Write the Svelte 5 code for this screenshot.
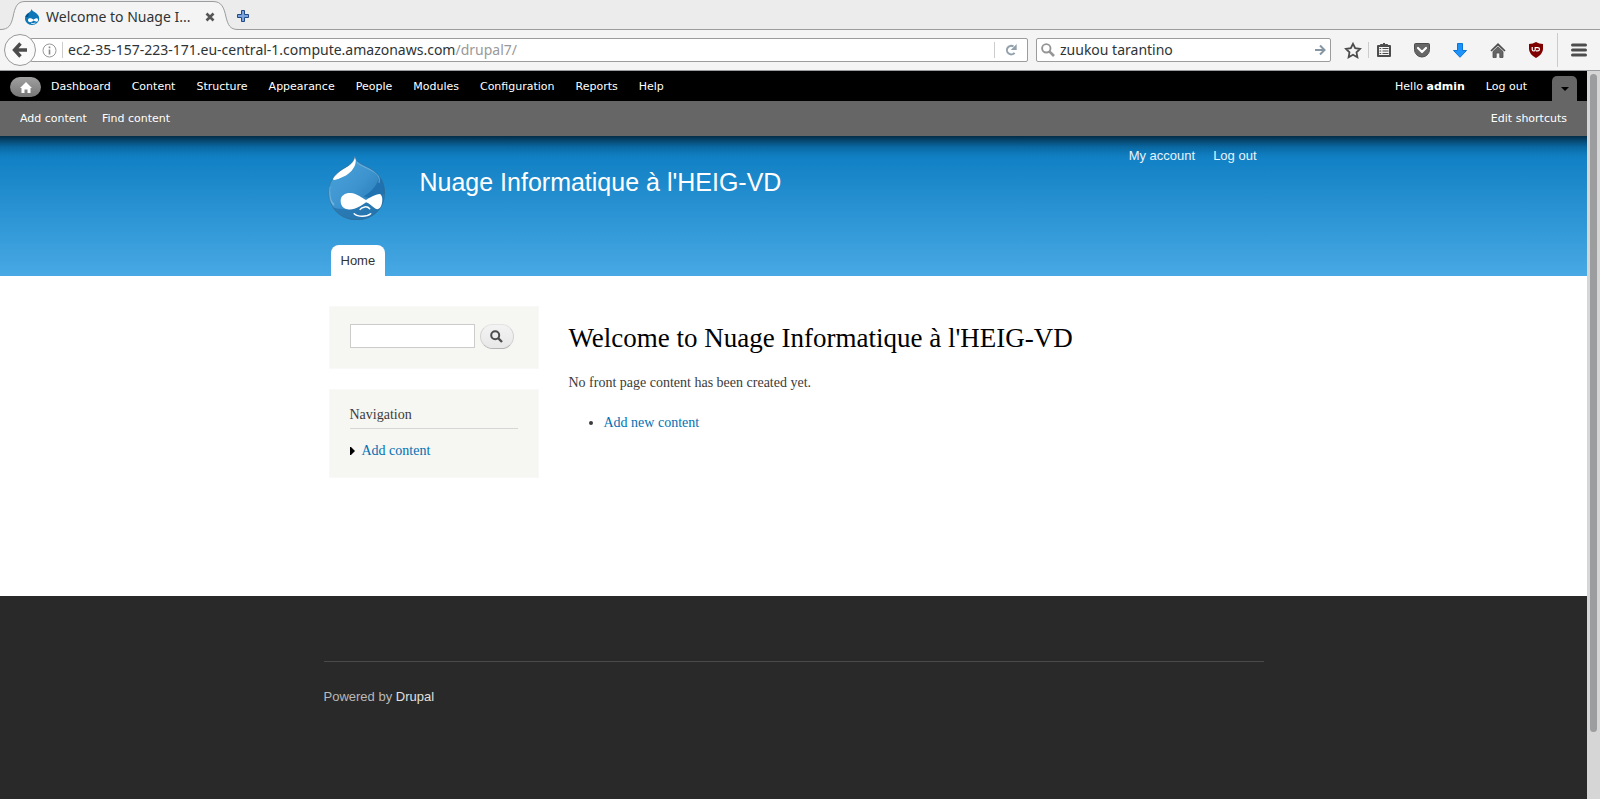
<script>
  const adminLinks = ['Dashboard', 'Content', 'Structure', 'Appearance', 'People', 'Modules', 'Configuration', 'Reports', 'Help'];
  const shortcuts = ['Add content', 'Find content'];
  let address = $state('ec2-35-157-223-171.eu-central-1.compute.amazonaws.com/drupal7/');
  let webSearch = $state('zuukou tarantino');
  let siteSearch = $state('');
  const domain = $derived(address.split('/')[0]);
  const path = $derived(address.slice(domain.length));
</script>

<div class="window">
  <header class="browser">
    <div class="tabstrip">
      <div class="tab">
        <svg class="tab-shape" viewBox="0 0 238 30" width="238" height="30" aria-hidden="true">
          <path d="M0 29.5C9 29.5 11 25 13 17C15 7 17 1.500 25 1.500H213C222 1.500 224 8 226 17C228 25 230 29.500 238 29.500V30H0Z" fill="#f4f4f4" />
          <path d="M0 29.500C9 29.500 11 25 13 17C15 7 17 1.500 25 1.500H213C222 1.500 224 8 226 17C228 25 230 29.500 238 29.500" fill="none" stroke="#9a9c9d" />
        </svg>
        <svg class="favicon" viewBox="0 0 16 16" width="16" height="16" aria-hidden="true">
          <path d="M7.500 0C8 2 10 2.500 12 4C14 5.500 15.200 7 15.200 9.500C15.200 13 12 16 8 16S1 13 1 9.500C1 6.500 2.500 5 5 3.500C6.500 2.500 7.300 1.500 7.500 0Z" fill="#0c76b8" />
          <path d="M1.500 8C2 6 3 5 5 4L4 8Z" fill="#064f80" />
          <path d="M4 11C4 9 6.500 8.500 9.500 10.700C12 8.500 14 8.700 14 10.800C14 13.500 12 13 9.700 11.600C6.500 14 4 13.500 4 11Z" fill="#fff" />
          <path d="M7 14.200Q9 15.200 11.500 14" fill="none" stroke="#fff" stroke-width=".8" />
        </svg>
        <span class="tab-title">Welcome to Nuage I...</span>
        <button class="plain" aria-label="Close tab">
          <svg viewBox="0 0 10 10" width="10" height="10"><path d="M1.500 1.500L8.500 8.500M8.500 1.500L1.500 8.500" stroke="#555" stroke-width="2.600" /></svg>
        </button>
      </div>
      <button class="plain new-tab" aria-label="New tab">
        <svg viewBox="0 0 12 12" width="12" height="12"><path d="M4.500 .5H7.500V4.500H11.500V7.500H7.500V11.500H4.500V7.500H.5V4.500H4.500Z" fill="#7ba3dc" stroke="#204a87" /></svg>
      </button>
    </div>

    <div class="navbar">
      <button class="plain back" aria-label="Back">
        <svg viewBox="0 0 16 16" width="16" height="16"><path d="M8.500 1.500L2.500 8L8.500 14.500M3 8H15" fill="none" stroke="#4c4c4c" stroke-width="3.400" /></svg>
      </button>
      <div class="field url">
        <svg viewBox="0 0 15 15" width="15" height="15" aria-hidden="true">
          <circle cx="7.500" cy="7.500" r="6.500" fill="none" stroke="#999" />
          <path d="M7.500 6.500V11.500M7.500 3.500V5.200" stroke="#888" stroke-width="1.600" />
        </svg>
        <span class="rule"></span>
        <span class="url-box">
          <span class="url-text" aria-hidden="true">{domain}<span>{path}</span></span>
          <input class="url-input" aria-label="Address" bind:value={address} />
        </span>
        <span class="rule"></span>
        <button class="plain reload" aria-label="Reload">
          <svg viewBox="0 0 12 12" width="12" height="12"><path d="M8.500 2.400A4.300 4.300 0 1 0 9.600 8.800" fill="none" stroke="#93a1ad" stroke-width="2" /><path d="M11.700 0V6H5.700Z" fill="#93a1ad" /></svg>
        </button>
      </div>
      <div class="field search">
        <svg viewBox="0 0 14 14" width="14" height="14" aria-hidden="true"><circle cx="5.300" cy="5.300" r="4.200" fill="none" stroke="#959595" stroke-width="1.900" /><path d="M8.300 8.300L13 13" stroke="#959595" stroke-width="2.600" /></svg>
        <input aria-label="Search the web" bind:value={webSearch} />
        <button class="plain" aria-label="Search">
          <svg viewBox="0 0 11 12" width="11" height="12"><path d="M0 6H9M5 1.500L9.500 6L5 10.500" fill="none" stroke="#8696a3" stroke-width="2" /></svg>
        </button>
      </div>
      <div class="tools">
        <button class="plain star" aria-label="Bookmark this page">
          <svg viewBox="0 0 18 17" width="18" height="17"><path d="M9 1.800L11.200 6.200L16 6.900L12.500 10.300L13.400 15.200L9 12.800L4.600 15.200L5.500 10.300L2 6.900L6.800 6.200Z" fill="none" stroke="#4c4c4c" stroke-width="1.800" /></svg>
        </button>
        <span class="rule"></span>
        <button class="plain tool" aria-label="Bookmarks">
          <svg viewBox="0 0 16 16" width="16" height="16"><path d="M2 4H14V14H2Z" fill="#f4f4f4" stroke="#4c4c4c" stroke-width="2" stroke-linejoin="round" /><path d="M4.500 4V2.500H6.500L8 1L9.500 2.500H11.500V4Z" fill="#4c4c4c" stroke="#4c4c4c" /><path d="M3.500 6.500H5.200M3.500 9H5.200M3.500 11.500H5.200M6.500 6.500H12.500M6.500 9H12.500M6.500 11.500H12.500" stroke="#4c4c4c" stroke-width="1.200" /></svg>
        </button>
        <button class="plain tool" aria-label="Save to Pocket">
          <svg viewBox="0 0 16 15" width="16" height="15"><path d="M1.500 .5H14.500Q15.500 .5 15.500 1.500V6.500A7.500 7.500 0 0 1 .5 6.500V1.500Q.5 .5 1.500 .5Z" fill="#666" stroke="#4c4c4c" /><path d="M4 5L8 9L12 5" fill="none" stroke="#fff" stroke-width="2.200" stroke-linecap="round" stroke-linejoin="round" /></svg>
        </button>
        <button class="plain tool" aria-label="Downloads">
          <svg viewBox="0 0 14 15" width="14" height="15"><path d="M4.500 .5H9.500V7.500H13.500L7 14.300L.5 7.500H4.500Z" fill="#1c93fb" stroke="#0d74d6" /></svg>
        </button>
        <button class="plain tool" aria-label="Home page">
          <svg viewBox="0 0 16 15" width="16" height="15"><path d="M1 8L8 1.300L15 8" fill="none" stroke="#4c4c4c" stroke-width="1.700" /><path d="M3 8.500L8 3.800L13 8.500V14.500H9.800V10H6.200V14.500H3Z" fill="#666" stroke="#4c4c4c" stroke-width=".8" /></svg>
        </button>
        <button class="plain tool" aria-label="Content blocker">
          <svg viewBox="0 0 16 16" width="16" height="16"><path d="M8 0Q11 2 15 2V7Q15 12 8 16Q1 12 1 7V2Q5 2 8 0Z" fill="#800000" /><path d="M4.200 5V7.600Q4.200 9 5.600 9T7.200 7.600V5M7.800 5.600H9.700Q11.500 5.600 11.500 7.200T9.700 8.800H7.800" fill="none" stroke="#fff" stroke-width="1.200" /></svg>
        </button>
        <span class="rule tall"></span>
        <button class="plain menu" aria-label="Open menu">
          <svg viewBox="0 0 16 14" width="16" height="14"><path d="M1.500 2H14.500M1.500 7H14.500M1.500 12H14.500" stroke="#4c4c4c" stroke-width="3" stroke-linecap="round" /></svg>
        </button>
      </div>
    </div>
  </header>

  <div class="viewport">
    <div class="page">
      <nav class="admin" aria-label="Administration">
        <div class="admin-menu">
          <a class="home" href="#home" aria-label="Home">
            <svg viewBox="0 0 12 11" width="12" height="11"><path d="M6 0L12 6H10.500V11H7.500V7.500H4.500V11H1.500V6H0Z" fill="#fff" /></svg>
          </a>
          {#each adminLinks as label}
            <a href="#{label}">{label}</a>
          {/each}
          <a class="user" href="#user">Hello <strong>admin</strong></a>
          <a href="#logout">Log out</a>
          <button class="plain toggle" aria-label="Hide shortcuts">
            <svg viewBox="0 0 8 4" width="8" height="4"><path d="M0 0H8L4 4Z" /></svg>
          </button>
        </div>
        <div class="shortcuts">
          {#each shortcuts as label}
            <a href="#{label}">{label}</a>
          {/each}
          <a class="edit" href="#edit">Edit shortcuts</a>
        </div>
      </nav>

      <header class="banner">
        <div class="inner banner-inner">
          <a class="logo" href="#front" aria-label="Front page">
            <svg viewBox="24 16 172 194" width="57" height="64">
              <defs>
                <linearGradient id="drop" x1="0" y1="0" x2="1" y2="1"><stop offset="0" stop-color="#4ba5dc" /><stop offset=".5" stop-color="#3d93ce" /><stop offset="1" stop-color="#1c6fae" /></linearGradient>
                <clipPath id="drop-clip"><path d="M105 17C108 32 120 38 140 48C172 62 196 88 196 128C196 176 158 210 110 210C62 210 25 174 25 126C25 88 50 65 78 50C92 42 102 34 105 17Z" /></clipPath>
              </defs>
              <g clip-path="url(#drop-clip)">
                <path d="M24 16H196V210H24Z" fill="url(#drop)" />
                <path d="M24 166Q60 182 105 176L190 130V210H24Z" fill="#2674ae" opacity=".8" />
                <path d="M178 68C180 98 160 122 132 138L160 148L198 130V90Z" fill="#1f72af" />
                <path d="M28 108C26 130 28 154 42 164" fill="none" stroke="#8bc6ea" stroke-width="6" opacity=".6" />
                <path d="M112 35C120 47 154 52 174 72Q182 84 178 98" fill="none" stroke="#78b9e4" stroke-width="4" opacity=".6" />
                <path d="M101 16H108C108 32 108 42 102 51C94 65 82 74 68 80C56 86 43 91 39 87C34 80 55 64 78 50C92 42 100 34 101 16Z" fill="#fff" />
              </g>
              <path d="M105 18C108 32 120 38 140 48C172 62 195 88 195 128C195 176 158 209 110 209C62 209 26 174 26 126C26 88 50 65 78 50C92 42 102 34 105 18Z" fill="none" stroke="#32698e" stroke-width="2.500" opacity=".7" />
              <path d="M62 152C62 134 78 127 92 128C112 129 128 145 139 149C150 142 166 132 181 131C188 135 190 147 187 160C184 174 176 180 168 176C158 169 148 159 139 156C125 167 108 177 90 178C72 179 62 169 62 152Z" fill="#fff" />
              <path d="M121 178C127 169 143 167 150 176M103 191C114 201 141 201 153 191" fill="none" stroke="#fff" stroke-width="4.500" stroke-linecap="round" />
            </svg>
          </a>
          <h1>Nuage Informatique à l'HEIG-VD</h1>
          <nav class="account" aria-label="Account">
            <a href="#account">My account</a>
            <a href="#logout">Log out</a>
          </nav>
          <nav class="main-menu" aria-label="Main"><a href="#front">Home</a></nav>
        </div>
      </header>

      <div class="inner body">
        <aside>
          <form class="block" onsubmit={(e) => e.preventDefault()}>
            <input aria-label="Search this site" bind:value={siteSearch} />
            <button aria-label="Search site">
              <svg viewBox="0 0 13 13" width="13" height="13"><circle cx="5.200" cy="5.200" r="4" fill="none" stroke="#4d4d4d" stroke-width="2" /><path d="M8 8L12 12" stroke="#4d4d4d" stroke-width="2.400" /></svg>
            </button>
          </form>
          <section class="block">
            <h2>Navigation</h2>
            <a class="leaf" href="#add">
              <svg viewBox="0 0 5 8" width="5" height="8" aria-hidden="true"><path d="M0 0H1L5 4L1 8H0Z" /></svg>
              Add content
            </a>
          </section>
        </aside>
        <main>
          <h2>Welcome to Nuage Informatique à l'HEIG-VD</h2>
          <p>No front page content has been created yet.</p>
          <ul><li><a href="#new">Add new content</a></li></ul>
        </main>
      </div>

      <footer>
        <div class="inner credit">Powered by <a href="#drupal">Drupal</a></div>
      </footer>
    </div>
    <div class="scrollbar"><span></span></div>
  </div>
</div>

<style>
  :global(body) { margin: 0; }
  .window { display: flex; flex-direction: column; min-height: 100vh; }
  a { color: inherit; text-decoration: none; }
  svg { display: block; flex: none; }
  input { box-sizing: border-box; min-width: 0; font: inherit; color: inherit; }
  .plain { display: flex; align-items: center; justify-content: center; border: 0; padding: 0; background: none; }

  .browser { font: 14px/20px "Noto Sans", sans-serif; color: #2e3436; }
  .tabstrip { display: flex; height: 30px; background: linear-gradient(#ececec 29px, #9a9c9d 29px); }
  .tab { position: relative; display: flex; align-items: center; box-sizing: border-box; width: 238px; padding: 4px 23px 0 24px; }
  .tab-shape { position: absolute; left: 0; top: 0; }
  .favicon, .tab-title, .tab .plain { position: relative; }
  .tab-title { flex: 1; margin-left: 6px; white-space: nowrap; }
  .new-tab { width: 10px; padding-top: 2px; }
  .navbar { display: flex; align-items: center; height: 40px; padding-left: 4px; background: #f4f4f4; border-bottom: 1px solid #9a9c9d; }
  .back { position: relative; box-sizing: border-box; width: 32px; height: 32px; border: 1px solid #999; border-radius: 50%; background: #fafafa; }
  .field { display: flex; align-items: center; box-sizing: border-box; height: 24px; border: 1px solid #9c9c9c; border-radius: 2px; background: #fff; }
  .field input { border: 0; padding: 0; outline: 0; background: none; }
  .url { flex: 1; margin-left: -6px; padding-left: 11px; }
  .rule { width: 1px; height: 16px; background: #ccc; }
  .url .rule:first-of-type { margin: 0 5px; }
  .url-box { position: relative; flex: 1; overflow: hidden; height: 20px; white-space: nowrap; }
  .url-text span { color: #999; }
  .url-input { position: absolute; inset: 0; width: 100%; }
  .field .url-input { color: transparent; caret-color: #2e3436; }
  .reload { width: 32px; }
  .search { width: 295px; margin-left: 8px; padding: 0 4px; gap: 5px; }
  .search input { flex: 1; }
  .tools { display: flex; align-items: center; }
  .star { width: 38px; padding-left: 6px; box-sizing: border-box; margin-right: -1px; }
  .tool { width: 38px; }
  .tools .rule + .tool { width: 30px; margin-right: 4px; }
  .tall { height: 34px; margin-left: 2px; }
  .menu { width: 42px; }

  .viewport { display: flex; flex: 1; }
  .page { display: flex; flex: 1; flex-direction: column; min-width: 0; }
  .scrollbar { width: 13px; background: #d6d6d6; }
  .scrollbar span { display: block; width: 7px; height: calc(100vh - 141px); margin: 3px; border-radius: 4px; background: #9c9d9f; }

  .admin { font: 11px/16px "DejaVu Sans", sans-serif; color: #fff; }
  .admin-menu { display: flex; align-items: center; box-sizing: border-box; height: 30px; padding: 2px 10px 0; gap: 21px; background: #000; }
  .home { display: flex; align-items: center; justify-content: center; width: 31px; height: 20px; margin-right: -11px; border-radius: 10px; background: linear-gradient(#a0a0a0, #777); }
  .user { margin-left: auto; }
  .toggle { align-self: flex-end; width: 25px; height: 25px; margin-left: 4px; border-radius: 5px 5px 0 0; background: #666; }
  .shortcuts { display: flex; align-items: center; gap: 15px; height: 35px; padding: 0 20px; background: #666; }
  .edit { margin-left: auto; }

  .inner { box-sizing: border-box; width: 100%; max-width: 940px; margin: 0 auto; }
  .banner { background: linear-gradient(rgba(0, 0, 0, .63), rgba(0, 0, 0, .4) 5px, rgba(0, 0, 0, .17) 11px, rgba(0, 0, 0, .05) 17px, transparent 22px), linear-gradient(#0779bf, #48a9e4); color: #fff; font: 13px/16px "Liberation Sans", sans-serif; }
  .banner-inner { display: grid; grid-template-columns: 92px 1fr auto; height: 140px; padding: 0 7px 0 4px; }
  .logo { padding-top: 20px; }
  h1 { margin: 0; padding-top: 31px; font-size: 25px; line-height: 30px; font-weight: 400; }
  .account { display: flex; gap: 18px; padding-top: 12px; color: #e8f3fa; }
  .main-menu { grid-column: 1 / -1; align-self: end; display: flex; padding-left: 3px; }
  .main-menu a { padding: 8px 10px 7px; border-radius: 8px 8px 0 0; background: #fff; color: #333; }

  .body { display: flex; gap: 30px; padding: 30px 5px 118px; font: 14px/20px "Liberation Serif", serif; color: #3b3b3b; }
  aside { display: flex; flex-direction: column; gap: 20px; width: 210px; }
  .block { border: 1px solid #f9f9f9; background: #f6f6f2; padding: 16px 20px 17px; }
  form.block { display: flex; gap: 5px; padding: 17px 20px 19px; }
  form input { flex: 1; height: 24px; border: 1px solid #ccc; background: #fff; }
  form button { display: flex; align-items: center; justify-content: center; width: 34px; height: 25px; margin-right: 4px; padding: 0; border: 1px solid #ccc; border-color: #e4e4e4 #d2d2d2 #b4b4b4; border-radius: 13px; background: linear-gradient(#f3f3f3, #e8e8e8); }
  .block h2 { margin: 0 0 13px; padding-bottom: 4px; border-bottom: 1px solid #d6d6d6; font-size: 14px; line-height: 18px; font-weight: 400; }
  .leaf { display: flex; align-items: center; gap: 7px; line-height: 18px; color: #0071b3; }
  main { flex: 1; }
  main h2 { margin: 15px 0 18px; color: #000; font-size: 27px; line-height: 34px; font-weight: 400; }
  p { margin: 0 0 20px; }
  ul { margin: 0; padding-left: 35px; }
  li a { color: #0071b3; }

  footer { flex: 1; padding: 65px 0 80px; background: #292929; font: 13px/16px "Liberation Sans", sans-serif; color: #b8b8b8; }
  .credit { border-top: 1px solid #4a4a4a; padding-top: 27px; }
  .credit a { color: #e0e0e0; }
</style>
